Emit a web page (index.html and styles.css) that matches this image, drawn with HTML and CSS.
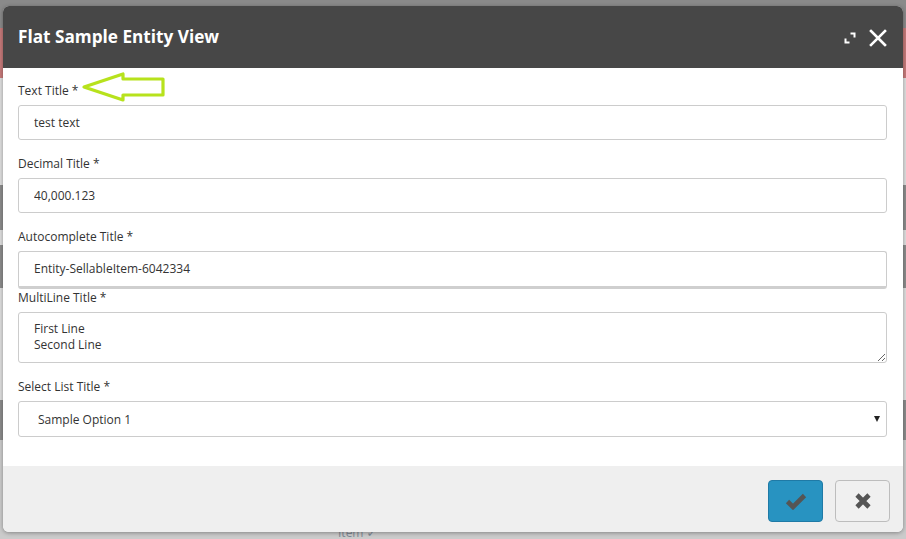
FILE: index.html
```html
<!DOCTYPE html>
<html lang="en">
<head>
<meta charset="utf-8">
<title>Flat Sample Entity View</title>
<link rel="stylesheet" href="styles.css">
</head>
<body>
<div class="backdrop">
  <div class="bd bd-top"></div>
  <div class="bd bd-pink"></div>
  <div class="bd bd-light bd-h107"></div>
  <div class="bd bd-dark bd-h45"></div>
  <div class="bd bd-light bd-h15"></div>
  <div class="bd bd-dark bd-h43"></div>
  <div class="bd bd-light bd-h112"></div>
  <div class="bd bd-dark bd-h40"></div>
  <div class="bd bd-light bd-rest">
    <span class="bd-item">Item ✓</span>
  </div>
</div>

<div class="modal">
  <div class="modal-header">
    <h1 class="modal-title">Flat Sample Entity View</h1>
    <div class="header-tools">
      <svg class="icon-expand" width="12" height="12" viewBox="0 0 12 12">
        <path d="M6.5 1.5H10.5V5.5" fill="none" stroke="#fff" stroke-width="2"/>
        <path d="M1.5 6.5V10.5H5.5" fill="none" stroke="#fff" stroke-width="2"/>
      </svg>
      <svg class="icon-close" width="18" height="18" viewBox="0 0 18 18">
        <path d="M2 2L16 16M16 2L2 16" stroke="#fff" stroke-width="2.6" stroke-linecap="square"/>
      </svg>
    </div>
  </div>

  <div class="modal-body">
    <div class="group">
      <label class="label">Text Title *</label>
      <input class="field" type="text" value="test text">
    </div>
    <div class="group">
      <label class="label">Decimal Title *</label>
      <input class="field" type="text" value="40,000.123">
    </div>
    <div class="group group-auto">
      <label class="label">Autocomplete Title *</label>
      <input class="field field-auto" type="text" value="Entity-SellableItem-6042334">
    </div>
    <div class="group">
      <label class="label">MultiLine Title *</label>
      <textarea class="field field-area">First Line
Second Line</textarea>
    </div>
    <div class="group">
      <label class="label">Select List Title *</label>
      <div class="select-wrap">
        <select class="field field-select">
          <option>Sample Option 1</option>
        </select>
      </div>
    </div>

    <svg class="annot-arrow" width="90" height="34" viewBox="0 0 90 34">
      <polygon points="3,16 42,3 42,8 82,8 82,24 42,24 42,29" fill="none" stroke="#b7e21c" stroke-width="3.2" stroke-linejoin="round"/>
    </svg>
  </div>

  <div class="modal-footer">
    <button class="btn btn-ok" type="button" aria-label="OK">
      <svg width="22" height="18" viewBox="0 0 22 18">
        <path d="M2.5 9.5L8 15L19.5 3.5" fill="none" stroke="#555" stroke-width="4.6"/>
      </svg>
    </button>
    <button class="btn btn-cancel" type="button" aria-label="Cancel">
      <svg width="18" height="18" viewBox="0 0 18 18">
        <path d="M3 3L15 15M15 3L3 15" stroke="#555" stroke-width="4.6"/>
      </svg>
    </button>
  </div>
</div>
</body>
</html>
```

FILE: styles.css
```css
* { box-sizing: border-box; }

html, body {
  margin: 0;
  padding: 0;
  width: 906px;
  height: 539px;
  overflow: hidden;
  font-family: "Open Sans", "DejaVu Sans", sans-serif;
  color: #333;
}

.backdrop {
  display: flex;
  flex-direction: column;
  height: 539px;
  background: #cbcbcb;
}
.bd { flex: none; }
.bd-top { height: 28px; background: #8a8a8a; }
.bd-pink { height: 50px; background: #c67a7a; }
.bd-light { background: #dedede; }
.bd-dark { background: #8c8c8c; }
.bd-h107 { height: 107px; }
.bd-h45 { height: 45px; }
.bd-h15 { height: 15px; }
.bd-h43 { height: 43px; }
.bd-h112 { height: 112px; }
.bd-h40 { height: 40px; }
.bd-rest {
  flex: 1;
  background: #cbcbcb;
  display: flex;
  align-items: flex-end;
  padding-left: 338px;
}
.bd-item {
  font-size: 12px;
  color: #7f8a96;
  line-height: 12px;
}

.modal {
  position: absolute;
  left: 3px;
  top: 6px;
  width: 900px;
  height: 526px;
  display: flex;
  flex-direction: column;
  border-radius: 6px;
  overflow: hidden;
  background: #fff;
  box-shadow: 0 1px 4px rgba(0,0,0,0.35);
}

.modal-header {
  height: 62px;
  flex: none;
  background: #474747;
  display: flex;
  align-items: center;
  justify-content: space-between;
  padding: 0 16px 0 15px;
}
.modal-title {
  margin: 0;
  font-size: 17.2px;
  font-weight: 700;
  color: #fff;
  line-height: 24px;
  margin-top: -1px;
}
.header-tools {
  display: flex;
  align-items: center;
  gap: 13px;
  margin-top: 1px;
}
.icon-expand { display: block; }
.icon-close { display: block; }

.modal-body {
  position: relative;
  flex: 1;
  padding: 14px 16px 0 15px;
}

.group {
  display: flex;
  flex-direction: column;
  margin-bottom: 15px;
}
.group-auto { margin-bottom: 0; }

.label {
  font-size: 12px;
  line-height: 17px;
  color: #333;
  margin-bottom: 6px;
}

.field {
  display: block;
  width: 869px;
  height: 35px;
  border: 1px solid #ccc;
  border-radius: 3px;
  background: #fff;
  font-family: "Open Sans", "DejaVu Sans", sans-serif;
  font-size: 12px;
  color: #333;
  padding: 0 15px;
  outline: none;
  margin: 0;
}
.field-auto {
  height: 38px;
  border-bottom: 3px solid #cfcfcf;
  padding-bottom: 2px;
}
.field-area {
  height: 51px;
  padding: 8px 15px;
  line-height: 16px;
  resize: vertical;
}

.select-wrap {
  position: relative;
  width: 869px;
}
.field-select {
  -webkit-appearance: none;
  appearance: none;
  height: 36px;
  padding: 0 19px;
  font-size: 12px;
}
.select-wrap::after {
  content: "";
  position: absolute;
  right: 7px;
  top: 15px;
  border-left: 3.5px solid transparent;
  border-right: 3.5px solid transparent;
  border-top: 6px solid #222;
  pointer-events: none;
}

.annot-arrow {
  position: absolute;
  left: 78px;
  top: 3px;
}

.modal-footer {
  height: 66px;
  flex: none;
  background: #efefef;
  display: flex;
  justify-content: flex-end;
  align-items: flex-start;
  gap: 12px;
  padding: 14px 13px 0 0;
}
.btn {
  width: 55px;
  height: 42px;
  border-radius: 4px;
  display: flex;
  align-items: center;
  justify-content: center;
  padding: 0;
  cursor: pointer;
}
.btn-ok {
  background: #2893c1;
  border: 1px solid #1f7aa6;
}
.btn-cancel {
  background: #f0f0f0;
  border: 1px solid #bdbdbd;
}
```
